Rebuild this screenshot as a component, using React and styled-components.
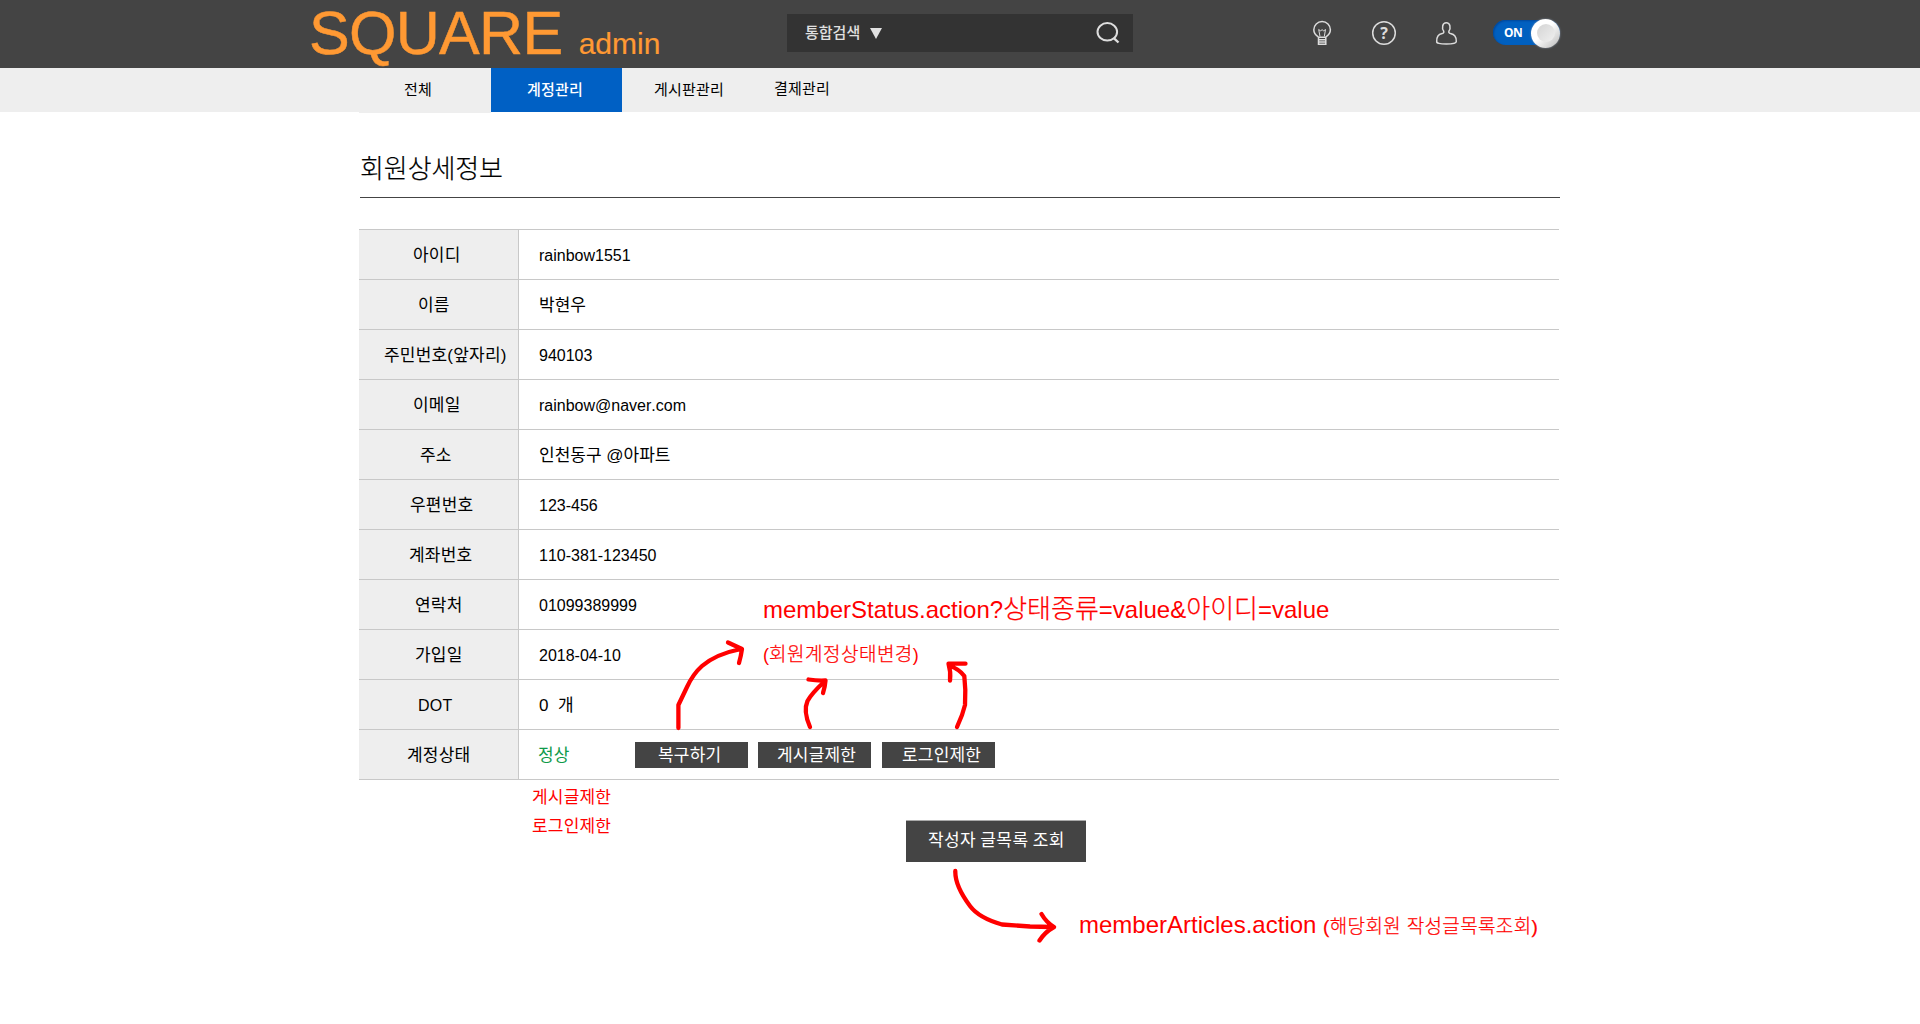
import React from 'react';
import styled, { createGlobalStyle } from 'styled-components';

const GlobalStyle = createGlobalStyle`
  * { box-sizing: border-box; }
  body { margin: 0; background: #fff; color: #000; font-family: "Liberation Sans", "Noto Sans CJK KR", sans-serif; font-kerning: none; }
`;

const Page = styled.div`
  position: relative;
  width: 1920px;
  height: 1024px;
  overflow: hidden;
`;

const Header = styled.header`
  display: flex;
  height: 68px;
  padding-left: 309px;
  background: #444;
`;

const Logo = styled.h1`
  width: 478px;
  margin: 0;
  font-size: 61px;
  font-weight: 400;
  line-height: 67px;
  letter-spacing: -0.7px;
  color: #ff9933;
  white-space: pre;
  -webkit-text-stroke: 0.5px #ff9933;
  span { font-size: 30px; letter-spacing: 0; -webkit-text-stroke: 0.2px #ff9933; }
`;

const Search = styled.div`
  display: flex;
  align-items: center;
  width: 346px;
  height: 38px;
  margin-top: 14px;
  padding: 0 13px 0 18px;
  background: #333;
  color: #e0e0e0;
`;

const Scope = styled.span`
  margin-top: -3px;
  font: 500 15px/22px "Noto Sans CJK KR", sans-serif;
`;

const Caret = styled.span`
  margin: 0 auto 0 10px;
  border: 6.5px solid transparent;
  border-top: 11px solid #e0e0e0;
  border-bottom: 0;
`;

const Tools = styled.div`
  display: flex;
  align-items: flex-start;
  padding: 18px 0 0 179px;
`;

const ToolIcon = styled.svg`
  flex: none;
  width: 30px;
  height: 30px;
  margin-right: ${(p) => p.$gap}px;
  overflow: visible;
  fill: none;
  stroke: #dcdcdc;
  stroke-width: 1.5;
  text { fill: #dcdcdc; stroke: none; font: 700 16px "Open Sans", sans-serif; }
`;

const Toggle = styled.div`
  display: flex;
  align-items: center;
  justify-content: space-between;
  width: 67px;
  height: 25px;
  margin-top: 2px;
  padding-left: 11px;
  border-radius: 13px;
  background: #0060c0;
  box-shadow: inset 1px 1px 2px #00479a;
  color: #fff;
  font: 700 12px/25px "Noto Sans", sans-serif;
  letter-spacing: -0.5px;
`;

const Knob = styled.span`
  display: grid;
  place-items: center;
  width: 29px;
  height: 29px;
  margin-top: 1px;
  border-radius: 50%;
  background: linear-gradient(135deg, #fff 45%, #b8b8b8);
  box-shadow: 0 0 2px #8a9ab0;
  &::after { content: ""; width: 18px; height: 18px; border-radius: 50%; background: linear-gradient(135deg, #d4d4d4, #f0f0f0); }
`;

const Nav = styled.nav`
  display: flex;
  height: 44px;
  padding-left: 359px;
  background: #eee;
`;

const Tab = styled.a`
  width: ${(p) => p.$width}px;
  height: ${(p) => p.$height || 44}px;
  padding-left: ${(p) => p.$indent}px;
  background: ${(p) => (p.$active ? '#0060c4' : '#eee')};
  color: ${(p) => (p.$active ? '#fff' : '#000')};
  font: ${(p) => (p.$active ? 500 : 400)} 15px/${(p) => p.$line || 42}px "Noto Sans CJK KR", sans-serif;
  letter-spacing: 0.2px;
`;

const Main = styled.main`
  width: 1201px;
  margin-left: 359px;
`;

const Title = styled.h2`
  height: 86px;
  margin: 0 0 31px 1px;
  padding-top: 35px;
  border-bottom: 1px solid #444;
  font: 300 26px/40px "Noto Sans CJK KR", sans-serif;
  letter-spacing: -0.1px;
  -webkit-text-stroke: 0.2px #000;
`;

const Table = styled.dl`
  width: 1200px;
  margin: 0;
  border-top: 1px solid #c8c8c8;
`;

const Row = styled.div`
  display: flex;
  height: 50px;
  border-bottom: 1px solid #c8c8c8;
`;

const Label = styled.dt`
  width: 160px;
  padding-left: ${(p) => p.$indent + 1}px;
  border-right: 1px solid #c8c8c8;
  background: #eee;
  font-size: ${(p) => (p.$latin ? 16 : 17)}px;
  line-height: 51px;
  letter-spacing: 0.2px;
  white-space: nowrap;
`;

const Value = styled.dd`
  display: flex;
  align-items: center;
  margin: 0;
  padding: ${(p) => (p.$korean ? 0 : 2)}px 0 ${(p) => (p.$korean ? 2 : 0)}px 20px;
  font-size: ${(p) => (p.$korean ? 17 : 16)}px;
  color: ${(p) => p.$color || '#000'};
  white-space: pre;
`;

const StateName = styled.span`
  width: 97px;
  margin-left: -1px;
`;

const Action = styled.button`
  width: 113px;
  height: 26px;
  margin: 3px ${(p) => p.$gap || 0}px 0 0;
  padding: 0 0 2px ${(p) => p.$indent + 1}px;
  border: 0;
  background: #444;
  color: #fff;
  text-align: left;
  font: 400 17px/24px "Noto Sans CJK KR", sans-serif;
  letter-spacing: 0.2px;
`;

const States = styled.div`
  padding: 1px 0 0 173px;
  color: #f00;
  font: 400 17px/29px "Noto Sans CJK KR", sans-serif;
  letter-spacing: 0.2px;
`;

const ListButton = styled.button`
  display: block;
  width: 180px;
  height: 42px;
  margin: -19px 0 0 547px;
  padding: 0 0 5px 22px;
  border: 0;
  border-top: 1px solid #aaa;
  background: #444;
  color: #fff;
  text-align: left;
  white-space: nowrap;
  font: 400 17px/36px "Noto Sans CJK KR", sans-serif;
  letter-spacing: 0.4px;
`;

const Note = styled.div`
  position: absolute;
  left: ${(p) => p.$x}px;
  top: ${(p) => p.$y}px;
  color: #f00;
  font-size: ${(p) => p.$size}px;
  line-height: 36px;
  white-space: pre;
`;

const NoteKo = styled.span`
  font-size: ${(p) => p.$size}px;
  letter-spacing: ${(p) => p.$track || 0}px;
  font-weight: 300;
  -webkit-text-stroke: 0.25px #f00;
`;

const Arrows = styled.svg`
  position: absolute;
  left: 0;
  top: 0;
  width: 1920px;
  height: 1024px;
  pointer-events: none;
  fill: none;
  stroke: #f00;
  stroke-width: 4.3;
  stroke-linecap: round;
  stroke-linejoin: round;
`;

const tabs = [
  { name: '전체', width: 132, indent: 45, height: 45 },
  { name: '계정관리', width: 131, indent: 36, active: true },
  { name: '게시판관리', width: 120, indent: 32 },
  { name: '결제관리', width: 120, indent: 32, line: 40 },
];

const rows = [
  { label: '아이디', indent: 53, value: 'rainbow1551' },
  { label: '이름', indent: 58, value: '박현우', korean: true },
  { label: '주민번호(앞자리)', indent: 24, value: '940103' },
  { label: '이메일', indent: 53, value: 'rainbow@naver.com' },
  { label: '주소', indent: 60, value: '인천동구 @아파트', korean: true },
  { label: '우편번호', indent: 50, value: '123-456' },
  { label: '계좌번호', indent: 49, value: '110-381-123450' },
  { label: '연락처', indent: 55, value: '01099389999' },
  { label: '가입일', indent: 55, value: '2018-04-10' },
  { label: 'DOT', indent: 58, value: '0  개', latin: true, korean: true },
];

export default function App() {
  return (
    <Page>
      <GlobalStyle />
      <Header>
        <Logo>SQUARE <span>admin</span></Logo>
        <Search>
          <Scope>통합검색</Scope>
          <Caret />
          <svg width="24" height="24" viewBox="0 0 24 24" fill="none" stroke="#dedede" strokeWidth="2">
            <ellipse cx="11.3" cy="10.8" rx="9.8" ry="8.7" />
            <path d="M17.5 16.8L22.5 21.5" strokeWidth="2.4" />
          </svg>
        </Search>
        <Tools>
          <ToolIcon viewBox="0 0 30 30" $gap={32}>
            <path d="M6.2 18.8C3.8 17.2 1.8 15 1.8 11.8A8.3 8.3 0 0 1 18.4 11.8C18.4 15 16.4 17.2 14 18.8M5.8 19.2H14.4M6.5 19.5V26.3H13.8V19.5M6.5 21.7H13.8M6.5 24H13.8" />
            <path d="M8 18.5L6.7 11.5L8.7 13L10.1 11.5L11.5 13L13.5 11.5L12.3 18.5" strokeWidth="1" />
          </ToolIcon>
          <ToolIcon viewBox="0 0 30 30" $gap={32}>
            <circle cx="10" cy="15" r="11.3" />
            <text x="6.2" y="20.8">?</text>
          </ToolIcon>
          <ToolIcon viewBox="0 0 30 30" $gap={27}>
            <path d="M7.7 13.2C5.6 10 6.3 4.7 10.3 4.7S15 10 12.9 13.2Q12.4 15 14.5 15.6C18.5 16.6 20.3 18.2 20.3 23.5Q20.3 26 10.3 26T.7 23.5C.7 18.2 2.2 16.6 6.2 15.6Q8.2 15 7.7 13.2Z" />
          </ToolIcon>
          <Toggle>ON<Knob /></Toggle>
        </Tools>
      </Header>
      <Nav>
        {tabs.map((t) => (
          <Tab key={t.name} $width={t.width} $indent={t.indent} $height={t.height} $active={t.active} $line={t.line}>{t.name}</Tab>
        ))}
      </Nav>
      <Main>
        <Title>회원상세정보</Title>
        <Table>
          {rows.map((r) => (
            <Row key={r.label}>
              <Label $indent={r.indent} $latin={r.latin}>{r.label}</Label>
              <Value $korean={r.korean}>{r.value}</Value>
            </Row>
          ))}
          <Row>
            <Label $indent={47}>계정상태</Label>
            <Value $korean $color="#0f9a4a">
              <StateName>정상</StateName>
              <Action $indent={22} $gap={10}>복구하기</Action>
              <Action $indent={18} $gap={11}>게시글제한</Action>
              <Action $indent={19}>로그인제한</Action>
            </Value>
          </Row>
        </Table>
        <States>
          <div>게시글제한</div>
          <div>로그인제한</div>
        </States>
        <ListButton>작성자 글목록 조회</ListButton>
      </Main>
      <Note $x={763} $y={591} $size={24}>
        memberStatus.action?<NoteKo $size={26}>상태종류</NoteKo>=value&amp;<NoteKo $size={26}>아이디</NoteKo>=value
      </Note>
      <Note $x={763} $y={637} $size={18}>
        (<NoteKo $size={19} $track={0.5}>회원계정상태변경</NoteKo>)
      </Note>
      <Note $x={1079} $y={907} $size={24}>
        memberArticles.action <NoteKo $size={19} $track={0.35}>(해당회원 작성글목록조회)</NoteKo>
      </Note>
      <Arrows viewBox="0 0 1920 1024">
        <path d="M678.4 728V705L687 687Q693 674 702 666Q716 654 741 649M728 642.5L742 649Q741 656 739 663" />
        <path d="M810 727Q803 711 807.5 701Q812 693 824 682M808.5 679.5Q818 681 825.5 680.5Q825 687 823 693" />
        <path d="M957 727L962 715L965 705Q966 690 964.3 676Q959 669 950 666M965.5 663.7H948.5Q951 672 950 680.5" />
        <path d="M955.3 871C955 882 961 894 970 906Q979 918 1002 924.5L1030 926.5L1052 927M1041.5 914Q1046 922 1054 927Q1045 932 1039.5 940.5" />
      </Arrows>
    </Page>
  );
}
